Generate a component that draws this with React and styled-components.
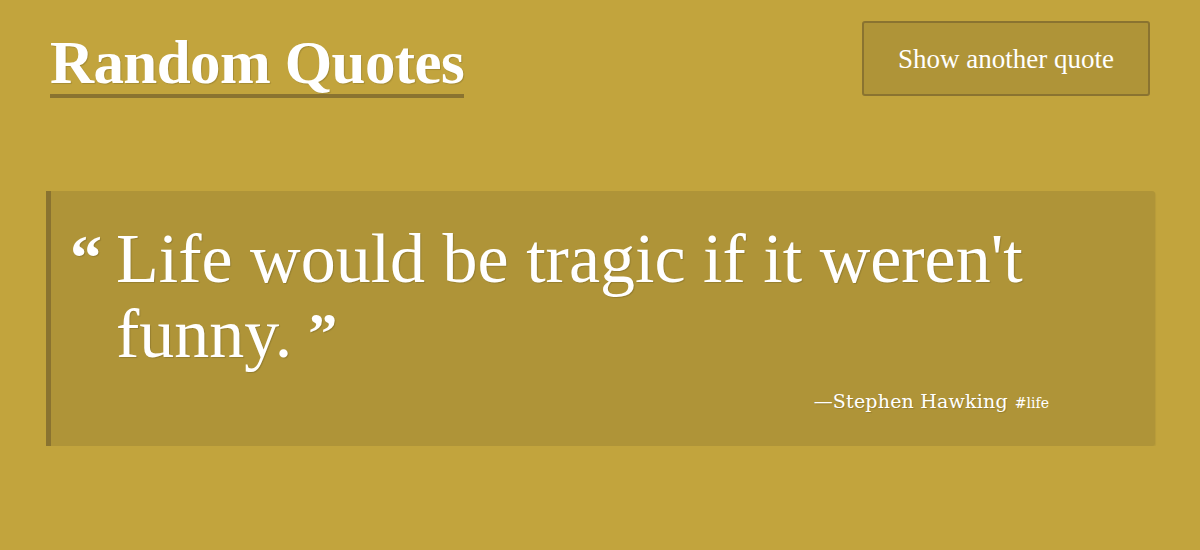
import React from "react";
import styled, { createGlobalStyle } from "styled-components";

const Global = createGlobalStyle`
  html, body { margin: 0; padding: 0; background: #c2a43d; }
  body { font-family: "Liberation Serif", "DejaVu Serif", serif; color: #fff; }
`;

const Page = styled.div`
  padding: 21px 45px 0 46px;
`;

const Header = styled.header`
  display: flex;
  justify-content: space-between;
  align-items: flex-start;
  padding-right: 5px;
`;

const Title = styled.h1`
  margin: 13px 0 0 4px;
  font-family: "Liberation Serif", serif;
  font-weight: 700;
  font-size: 61px;
  line-height: 57px;
  letter-spacing: -0.6px;
  color: #fff;
  border-bottom: 4px solid #8a7330;
  padding-bottom: 3px;
  text-shadow: 1px 1px 1px rgba(0, 0, 0, 0.15);
`;

const Button = styled.button`
  width: 288px;
  height: 75px;
  padding-top: 3px;
  background: #af9438;
  border: 2px solid #8a7330;
  border-radius: 3px;
  color: #fff;
  font-family: "Liberation Serif", serif;
  font-size: 27px;
  cursor: pointer;
`;

const Card = styled.blockquote`
  margin: 93px 0 0 0;
  background: #af9438;
  border-left: 5px solid #8a7330;
  border-radius: 0 3px 3px 0;
  padding: 30px 30px 34px 21px;
  box-shadow: 1px 1px 1px rgba(0, 0, 0, 0.05);
`;

const QuoteRow = styled.div`
  display: flex;
  align-items: flex-start;
`;

const Mark = styled.span`
  font-size: 64px;
  line-height: 1;
  font-weight: 700;
  margin-top: 5px;
  margin-left: -2px;
  text-shadow: 1px 1px 1px rgba(0, 0, 0, 0.15);
`;

const Text = styled.p`
  margin: 0 0 0 14px;
  font-size: 70px;
  line-height: 75px;
  text-shadow: 1px 1px 1px rgba(0, 0, 0, 0.15);
`;

const Close = styled.span`
  display: inline-block;
  font-size: 58px;
  font-weight: 700;
  line-height: 58px;
  vertical-align: top;
  margin-top: 9px;
  margin-left: 16px;
`;

const Cite = styled.footer`
  display: flex;
  justify-content: flex-end;
  align-items: baseline;
  gap: 7px;
  margin-top: 19px;
  padding-right: 76px;
  font-family: "DejaVu Serif", serif;
`;

const Author = styled.span`
  font-size: 19px;
  letter-spacing: 0.2px;
  text-shadow: 1px 1px 1px rgba(0, 0, 0, 0.15);
`;

const Tag = styled.span`
  font-size: 14px;
`;

export default function App() {
  return (
    <>
      <Global />
      <Page>
        <Header>
          <Title>Random Quotes</Title>
          <Button>Show another quote</Button>
        </Header>
        <Card>
          <QuoteRow>
            <Mark>“</Mark>
            <Text>
              Life would be tragic if it weren't funny.<Close>”</Close>
            </Text>
          </QuoteRow>
          <Cite>
            <Author>—Stephen Hawking</Author>
            <Tag>#life</Tag>
          </Cite>
        </Card>
      </Page>
    </>
  );
}
